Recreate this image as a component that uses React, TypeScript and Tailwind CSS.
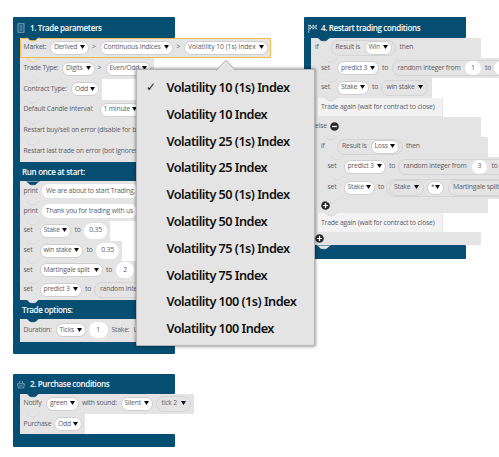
import type { ReactNode } from "react";
import clsx from "clsx";

type Props = { className?: string; children?: ReactNode };

/** The connector bump that joins a statement to the one above it. */
function Notch({ fill = "#e4e4e4", stroke = "#d2d2d2" }: { fill?: string; stroke?: string }) {
  return (
    <svg className="absolute left-[6px] top-[-0.5px]" width="14" height="5" viewBox="0 0 14 5">
      <path d="M0.5 0.5 C2 0.5 3 3.7 5 3.7 H8.5 C10.5 3.7 11.5 0.5 13.5 0.5" fill={fill} stroke={stroke} strokeWidth="0.7" />
    </svg>
  );
}

function Row({ className, notch = "plain", children }: Props & { notch?: "plain" | "navy" | "amber" | "none" }) {
  return (
    <div className={clsx("relative flex shrink-0 items-center whitespace-nowrap bg-[#e4e4e4]", className)}>
      {notch === "plain" && <Notch />}
      {notch === "navy" && <Notch fill="#064e72" stroke="#064e72" />}
      {notch === "amber" && <Notch stroke="#fbc56b" />}
      {children}
    </div>
  );
}

function Label({ className, children }: Props) {
  return <span className={clsx("block shrink-0 whitespace-pre", className)}>{children}</span>;
}

function Caret() {
  return (
    <svg className="mb-[1px] shrink-0" width="5" height="4" viewBox="0 0 5 4">
      <path d="M0 0 H5 L2.5 4 Z" fill="#0a0a0a" />
    </svg>
  );
}

function Select({ className, children }: Props) {
  return (
    <span className={clsx("flex h-[14px] shrink-0 items-center justify-between rounded-full border border-[#cfcfcf] bg-white pl-[3px] pr-[3px]", className)}>
      <span>{children}</span>
      <Caret />
    </span>
  );
}

function Value({ className, children }: Props) {
  return (
    <span className={clsx("flex h-[14px] shrink-0 items-center justify-center rounded-full bg-white", className)}>{children}</span>
  );
}

function Reporter({ className, children }: Props) {
  return (
    <span className={clsx("flex h-[16px] shrink-0 items-center rounded-full border border-[#d4d4d4]", className)}>{children}</span>
  );
}

function Title({ icon, children }: { icon: ReactNode; children: ReactNode }) {
  return (
    <>
      <span className="flex w-[17px] shrink-0 items-center pl-[4px]">{icon}</span>
      <span>{children}</span>
    </>
  );
}

const band = "flex items-center rounded-[1px] bg-[#064e72] whitespace-nowrap text-[8px] font-semibold tracking-[-0.35px] text-white";

function Toggle({ plus, className }: { plus?: boolean; className?: string }) {
  return (
    <svg className={clsx("shrink-0", className)} width="9" height="9" viewBox="0 0 9 9">
      <circle cx="4.5" cy="4.5" r="4.3" fill="#2c2c2c" />
      <path d={plus ? "M2 4.5H7M4.5 2V7" : "M2 4.5H7"} stroke="#fff" strokeWidth="1.2" />
    </svg>
  );
}

function TradeParameters() {
  return (
    <section className="absolute left-[13px] top-[17px] flex w-[162px] flex-col">
      <header className={clsx(band, "h-[20.5px] pt-[2px]")}>
        <Title
          icon={
            <svg width="8" height="10" viewBox="0 0 8 10" fill="none" stroke="#9fb9c8" strokeWidth="0.8">
              <rect x="1" y="0.8" width="6" height="8.4" />
              <path d="M2.5 3H5.5M2.5 5H5.5M2.5 7H5.5" />
            </svg>
          }
        >
          1. Trade parameters
        </Title>
      </header>
      <div className="flex flex-col items-start border-l-[7px] border-[#064e72]">
        <Row notch="none" className="z-10 h-[20.5px] w-[251px] rounded-[1px] border border-[#fbb84b]">
          <svg className="absolute left-[5px] top-[-1.5px]" width="14" height="5" viewBox="0 0 14 5">
            <path d="M0.5 0.5 C2 0.5 3 3.7 5 3.7 H8.5 C10.5 3.7 11.5 0.5 13.5 0.5" fill="#064e72" stroke="#fbb84b" strokeWidth="1" />
            <path d="M0.5 0H13.5" stroke="#064e72" />
          </svg>
          <Label className="ml-[2.5px] w-[26.5px]">Market:</Label>
          <Select className="w-[39px]">Derived</Select>
          <Label className="ml-[3px] w-[7.5px]">&gt;</Label>
          <Select className="w-[73px]">Continuous Indices</Select>
          <Label className="ml-[4px] w-[7.5px]">&gt;</Label>
          <Select className="w-[83.5px] tracking-[-0.05px]">Volatility 10 (1s) Index</Select>
        </Row>
        <Row notch="amber" className="h-[21px] w-[133.5px]">
          <Label className="ml-[3.5px] w-[38.5px]">Trade Type:</Label>
          <Select className="w-[32.5px]">Digits</Select>
          <Label className="ml-[3px] w-[8px]">&gt;</Label>
          <Select className="w-[45px]">Even/Odd</Select>
        </Row>
        <Row className="h-[20.5px] w-[82px]">
          <Label className="ml-[3.5px] w-[47.5px]">Contract Type:</Label>
          <Select className="w-[27.5px]">Odd</Select>
        </Row>
        <Row className="h-[20.5px] w-[155px]">
          <Label className="ml-[3.5px] w-[76px]">Default Candle Interval:</Label>
          <Select className="w-[41px]">1 minute</Select>
        </Row>
        <Row className="h-[21px] w-[155px] overflow-hidden">
          <Label className="ml-[3.5px]">Restart buy/sell on error (disable for better</Label>
        </Row>
        <Row className="h-[21px] w-[155px] overflow-hidden">
          <Label className="ml-[3.5px]">Restart last trade on error (bot ignores</Label>
        </Row>
      </div>
      <div className={clsx(band, "h-[19px] pl-[9px] !tracking-[-0.3px]")}>Run once at start:</div>
      <div className="flex flex-col items-start border-l-[7px] border-[#064e72]">
        <Row notch="navy" className="h-[20px] w-[155px]">
          <Label className="ml-[3.5px] w-[18.5px]">print</Label>
          <Value className="w-[97px]">We are about to start Trading,</Value>
        </Row>
        <Row className="h-[20px] w-[155px]">
          <Label className="ml-[3.5px] w-[18.5px]">print</Label>
          <Value className="w-[95px]">Thank you for trading with us</Value>
        </Row>
        <Row className="h-[19.5px] w-[90px]">
          <Label className="ml-[3.5px] w-[16px]">set</Label>
          <Select className="w-[31.5px]">Stake</Select>
          <Label className="ml-[3.5px] w-[9.5px]">to</Label>
          <Value className="h-[16px] w-[23px]">0.35</Value>
        </Row>
        <Row className="h-[20px] w-[102px]">
          <Label className="ml-[3.5px] w-[16px]">set</Label>
          <Select className="w-[43.5px]">win stake</Select>
          <Label className="ml-[3.5px] w-[9.5px]">to</Label>
          <Value className="h-[16px] w-[23px]">0.35</Value>
        </Row>
        <Row className="h-[19.5px] w-[120px]">
          <Label className="ml-[3.5px] w-[16px]">set</Label>
          <Select className="w-[63px]">Martingale split</Select>
          <Label className="ml-[3.5px] w-[10px]">to</Label>
          <Value className="h-[16px] w-[18px]">2</Value>
        </Row>
        <Row className="h-[19.5px] w-[155px]">
          <Label className="ml-[3.5px] w-[16px]">set</Label>
          <Select className="w-[42px]">predict 3</Select>
          <Label className="ml-[3.5px] w-[9px]">to</Label>
          <Reporter className="w-[62px] pl-[5px]">random integer</Reporter>
        </Row>
      </div>
      <div className={clsx(band, "relative h-[19px] pl-[9px] pt-[1px]")}>
        <span className="absolute left-[7px] top-0">
          <Notch stroke="#e4e4e4" />
        </span>
        Trade options:
      </div>
      <div className="flex flex-col items-start border-l-[7px] border-[#064e72]">
        <Row notch="navy" className="h-[23px] w-[155px] rounded-l-[2px]">
          <Label className="ml-[3.5px] w-[32px]">Duration:</Label>
          <Select className="w-[30px]">Ticks</Select>
          <Value className="ml-[3px] h-[16px] w-[19px]">1</Value>
          <Label className="ml-[4px] w-[22px]">Stake:</Label>
          <Label>USD</Label>
        </Row>
      </div>
      <div className={clsx(band, "h-[12.5px]")} />
    </section>
  );
}

function PurchaseConditions() {
  return (
    <section className="absolute left-[13px] top-[374px] flex w-[162px] flex-col">
      <header className={clsx(band, "h-[19.5px] pt-[1px]")}>
        <Title
          icon={
            <svg width="8" height="9" viewBox="0 0 8 9" fill="none" stroke="#9fb9c8" strokeWidth="0.7">
              <path d="M0.5 3.8H7.5L6.7 8H1.3ZM2 3.8L3 0.8M6 3.8L5 0.8M3 5V7M5 5V7" />
            </svg>
          }
        >
          2. Purchase conditions
        </Title>
      </header>
      <div className="flex flex-col items-start border-l-[7px] border-[#064e72]">
        <Row notch="navy" className="h-[20px] w-[174px] rounded-[1px]">
          <Label className="ml-[3.5px] w-[22.5px]">Notify</Label>
          <Select className="w-[32.5px]">green</Select>
          <Label className="ml-[3.5px] w-[38.5px]">with sound:</Label>
          <Select className="w-[32px]">Silent</Select>
          <Reporter className="ml-[3.5px] w-[35px] justify-between px-[4.5px]">
            tick 2 <Caret />
          </Reporter>
        </Row>
        <Row className="h-[20.5px] w-[65px] pt-[1px]">
          <Label className="ml-[3.5px] w-[30.5px]">Purchase</Label>
          <Select className="w-[27.5px]">Odd</Select>
        </Row>
      </div>
      <div className={clsx(band, "h-[13px]")} />
    </section>
  );
}

function RestartConditions() {
  return (
    <section className="absolute left-[304px] top-[17px] flex w-[195px] flex-col items-start overflow-hidden">
      <header className={clsx(band, "h-[20.5px] w-[162px] pt-[2px]")}>
        <Title
          icon={
            <svg width="9" height="9" viewBox="0 0 9 9" fill="#e7eef2">
              <path d="M0.5 0.5H1.2V9H0.5Z" />
              <path d="M1.5 1H3V2.4H1.5ZM4.5 1H6V2.4H4.5ZM7.5 1H8.8V2.4H7.5ZM3 2.4H4.5V3.8H3ZM6 2.4H7.5V3.8H6ZM1.5 3.8H3V5.2H1.5ZM4.5 3.8H6V5.2H4.5ZM7.5 3.8H8.8V5.2H7.5Z" />
            </svg>
          }
        >
          4. Restart trading conditions
        </Title>
      </header>
      <div className="flex w-full flex-col items-start border-l-[7px] border-[#064e72]">
        <Row notch="navy" className="h-[20.5px] w-[170px] rounded-tr-[1px]">
          <Label className="ml-[4px] w-[15.5px]">if</Label>
          <Reporter className="w-[65px] pl-[4px]">
            <Label className="w-[29px]">Result is</Label>
            <Select className="w-[27px]">Win</Select>
          </Reporter>
          <Label className="ml-[4px]">then</Label>
        </Row>
        <div className="flex w-full flex-col items-start border-l-[7px] border-[#e4e4e4]">
          <Row className="h-[20px] w-[181px]">
            <Label className="ml-[3px] w-[16px]">set</Label>
            <Select className="w-[41.5px]">predict 3</Select>
            <Label className="ml-[3.5px] w-[10px]">to</Label>
            <Reporter className="w-[130px] pl-[4.5px]">
              <Label className="w-[67.5px]">random integer from</Label>
              <Value className="w-[15.5px]">1</Value>
              <Label className="ml-[4.5px] w-[9px]">to</Label>
              <Value className="w-[15.5px]" />
            </Reporter>
          </Row>
          <Row className="h-[19.5px] w-[113.5px]">
            <Label className="ml-[3px] w-[16px]">set</Label>
            <Select className="w-[31.5px]">Stake</Select>
            <Label className="ml-[3.5px] w-[9px]">to</Label>
            <Reporter className="w-[47px] justify-between px-[4.5px]">
              win stake <Caret />
            </Reporter>
          </Row>
          <Row className="h-[19.5px] w-[125px] border-b border-r border-[#e4e4e4] bg-[#f2f2f2] pt-[1px]">
            <Label className="ml-[3px]">Trade again (wait for contract to close)</Label>
          </Row>
        </div>
        <Row notch="none" className="h-[19.5px] w-[170px]">
          <Label className="ml-[4px] w-[14.5px]">else</Label>
          <Toggle />
        </Row>
        <div className="flex w-full flex-col items-start border-l-[7px] border-[#e4e4e4]">
          <Row className="h-[20px] w-[170px] rounded-tr-[1px]">
            <Label className="ml-[3px] w-[16px]">if</Label>
            <Reporter className="w-[65.5px] pl-[4px]">
              <Label className="w-[28.5px]">Result is</Label>
              <Select className="w-[28.5px]">Loss</Select>
            </Reporter>
            <Label className="ml-[3.5px]">then</Label>
          </Row>
          <div className="flex w-full flex-col items-start border-l-[6px] border-[#e4e4e4]">
            <Row className="h-[20px] w-[175px]">
              <Label className="ml-[3.5px] w-[16px]">set</Label>
              <Select className="w-[42px]">predict 3</Select>
              <Label className="ml-[3.5px] w-[9px]">to</Label>
              <Reporter className="w-[130px] pl-[4.5px]">
                <Label className="w-[68px]">random integer from</Label>
                <Value className="w-[15.5px]">3</Value>
                <Label className="ml-[4.5px]">to</Label>
              </Reporter>
            </Row>
            <Row className="h-[22.5px] w-[175px]">
              <Label className="ml-[3.5px] w-[16px]">set</Label>
              <Select className="w-[31px]">Stake</Select>
              <Label className="ml-[3.5px] w-[8px]">to</Label>
              <Reporter className="h-[18px] w-[120px] pl-[2px]">
                <Reporter className="w-[35px] justify-between px-[4px]">
                  Stake <Caret />
                </Reporter>
                <Select className="ml-[3px] w-[17px]">*</Select>
                <Reporter className="ml-[3.5px] w-[70px] pl-[4.5px]">Martingale split</Reporter>
              </Reporter>
            </Row>
          </div>
          <Row className="h-[13.5px] w-[170px] pl-[3px]">
            <Toggle plus />
          </Row>
          <Row className="h-[19.5px] w-[125px] border-r border-[#e4e4e4] bg-[#f2f2f2] pt-[2px]">
            <Label className="ml-[3px]">Trade again (wait for contract to close)</Label>
          </Row>
        </div>
        <Row notch="none" className="h-[13px] w-[170px] rounded-r-[1px] pl-[3.5px]">
          <Toggle plus />
        </Row>
      </div>
      <div className={clsx(band, "relative h-[13.5px] w-[162px]")}>
        <span className="absolute left-[7px] top-0">
          <Notch stroke="#e4e4e4" />
        </span>
      </div>
    </section>
  );
}

const markets = ["10 (1s)", "10", "25 (1s)", "25", "50 (1s)", "50", "75 (1s)", "75", "100 (1s)", "100"];

function MarketMenu() {
  return (
    <div className="absolute left-[136px] top-[69px] z-20 h-[277px] w-[179px] rounded-[1px] border border-[#b4b4b4] bg-[#e4e4e4] pt-[4px] shadow-[0_0_3px_1px_rgba(0,0,0,0.35)]">
      <svg className="absolute left-[79px] top-[-10px]" width="20" height="11" viewBox="0 0 20 11">
        <path d="M0.5 10.5 L8.5 1.5 Q10 0 11.5 1.5 L19.5 10.5" fill="#e4e4e4" stroke="#ababab" />
        <path d="M1 10.8H19" stroke="#e4e4e4" />
      </svg>
      <ul className="flex flex-col font-['Noto_Sans','Open_Sans',sans-serif] text-[12.7px] font-semibold tracking-[-0.53px] text-[#111]">
        {markets.map((market, index) => (
          <li key={market} className="flex h-[26.8px] items-center whitespace-nowrap">
            <span className="w-[29.5px] pl-[9px] font-['DejaVu_Sans',sans-serif] text-[12px] font-normal">{index === 0 ? "✓" : ""}</span>
            <span>Volatility {market} Index</span>
          </li>
        ))}
      </ul>
    </div>
  );
}

export default function App() {
  return (
    <main className="relative h-[457px] w-[499px] overflow-hidden bg-white font-['Open_Sans','Noto_Sans',sans-serif] text-[6.8px] leading-none tracking-[-0.19px] text-[#5d5d66]">
      <TradeParameters />
      <PurchaseConditions />
      <RestartConditions />
      <MarketMenu />
    </main>
  );
}
